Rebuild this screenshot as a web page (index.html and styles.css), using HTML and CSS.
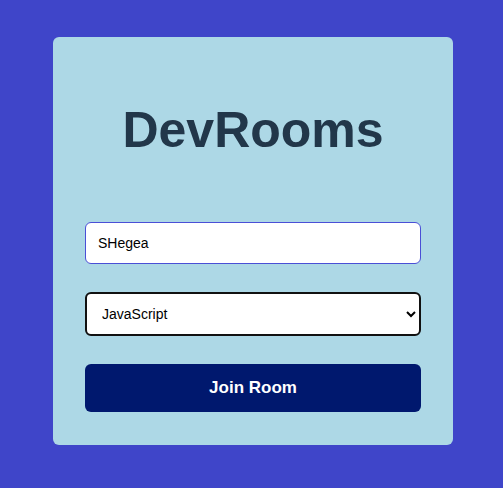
FILE: index.html
```html
<!DOCTYPE html>
<html>
<head>
<meta charset="utf-8">
<link rel="stylesheet" href="styles.css">
</head>
<body>
<div class="card">
  <h1 class="title">DevRooms</h1>
  <form class="form">
    <input class="field" type="text" value="SHegea">
    <select class="field select">
      <option>JavaScript</option>
      <option>Python</option>
    </select>
    <button class="btn" type="button">Join Room</button>
  </form>
</div>
</body>
</html>
```

FILE: styles.css
```css
html, body {
  margin: 0;
  padding: 0;
}
body {
  background: #3f45c9;
  font-family: "Liberation Sans", Arial, sans-serif;
  width: 503px;
  height: 488px;
  padding: 37px 0 0 53px;
  box-sizing: border-box;
}
.card {
  width: 400px;
  height: 408px;
  box-sizing: border-box;
  background: #add8e6;
  border-radius: 6px;
  padding: 32px 32px 33px;
  display: flex;
  flex-direction: column;
}
.title {
  margin: 33px 0 63px;
  text-align: center;
  color: #22374a;
  font-size: 50px;
  font-weight: bold;
  line-height: 57px;
}
.form {
  display: flex;
  flex-direction: column;
  gap: 28px;
}
.field {
  height: 42px;
  box-sizing: border-box;
  border: 1px solid #4a4fd6;
  border-radius: 6px;
  background: #fff;
  padding: 0 12px;
  font-family: "Liberation Sans", Arial, sans-serif;
  font-size: 14px;
  color: #000;
  outline: none;
}
.select {
  height: 44px;
  border: 2px solid #111;
  padding: 0 11px;
}
.btn {
  height: 48px;
  border: none;
  border-radius: 6px;
  background: #00186e;
  color: #fff;
  font-family: "Liberation Sans", Arial, sans-serif;
  font-size: 17px;
  font-weight: bold;
}
```
